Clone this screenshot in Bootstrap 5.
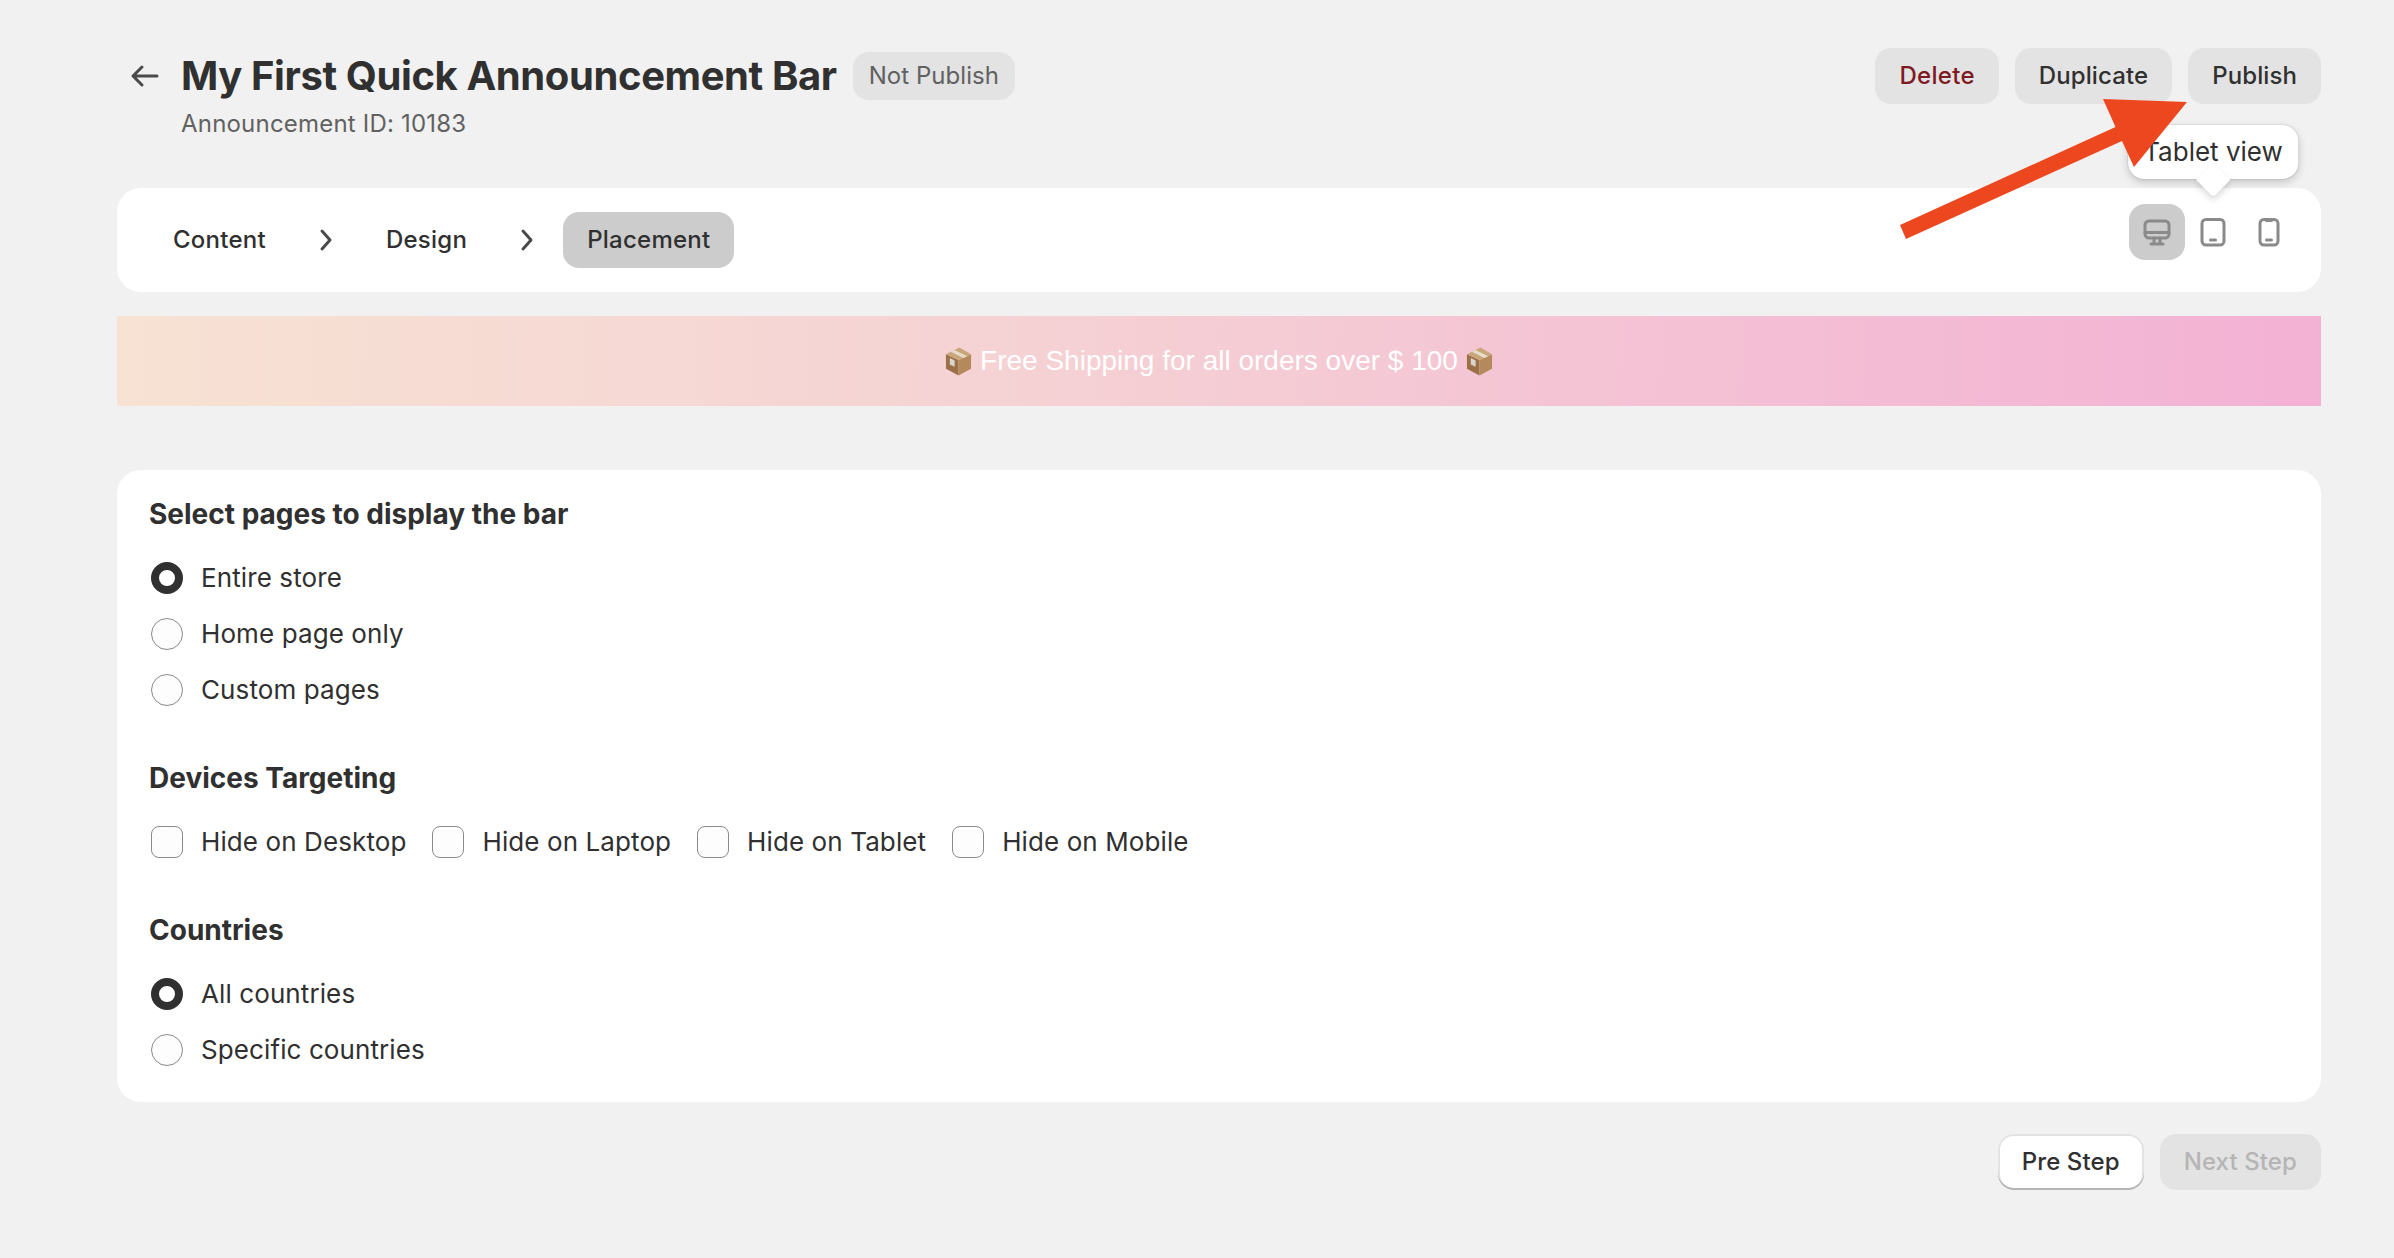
<!DOCTYPE html>
<html lang="en">
<head>
  <meta charset="UTF-8">
  <title>My First Quick Announcement Bar</title>
  <meta name="viewport" content="width=device-width, initial-scale=1.0">
  <link href="https://cdn.jsdelivr.net/npm/bootstrap@5.3.0/dist/css/bootstrap.min.css" rel="stylesheet">
  <style>
    body {
      background-color: #f1f1f1;
      color: #303030;
      font-family: Inter, "Liberation Sans", sans-serif;
      font-size: 26px;
      margin: 0;
    }

    .page-wrap {
      position: relative;
      padding: 48px 73px 68px 117px;
    }

    .page-head {
      height: 140px;
    }

    .back-link {
      width: 64px;
      height: 56px;
      padding-left: 13px;
      color: #4a4a4a;
    }

    .page-title {
      font-size: 40px;
      font-weight: 650;
      line-height: 56px;
      letter-spacing: -0.4px;
      margin: 0;
    }

    .state-pill {
      background-color: #e3e3e3;
      color: #616161;
      border-radius: 16px;
      font-size: 24px;
      letter-spacing: 0.05px;
      line-height: 48px;
      padding: 0 16px;
      margin-left: 16px;
    }

    .page-sub {
      color: #616161;
      font-size: 24px;
      letter-spacing: 0.2px;
      line-height: 32px;
      margin-top: 4px;
    }

    .act-btn {
      background-color: #e3e3e3;
      border: 0;
      border-radius: 16px;
      color: #303030;
      font-size: 24px;
      font-weight: 550;
      letter-spacing: 0.1px;
      line-height: 56px;
      padding: 0 24px;
    }

    .act-btn:hover { background-color: #e3e3e3; color: #303030; }
    .act-danger, .act-danger:hover { color: #7e1a1f; letter-spacing: 0.3px; }

    .act-white, .act-white:hover {
      background-color: #fff;
      box-shadow: inset 0 -2px 0 #b5b5b5, inset 0 0 0 2px #e3e3e3;
    }

    .act-btn.act-off {
      color: #b5b5b5;
      opacity: 1;
      background-color: #e3e3e3;
    }

    .step-bar {
      background-color: #fff;
      border-radius: 24px;
      height: 104px;
      padding: 16px 24px 16px 32px;
    }

    .step-pill {
      border-radius: 16px;
      font-size: 24px;
      font-weight: 500;
      letter-spacing: 0.25px;
      line-height: 56px;
      padding: 0 24px;
    }

    .step-pill.is-on { background-color: #ccc; }

    .step-sep {
      width: 72px;
      color: #4a4a4a;
    }

    .view-btn {
      position: relative;
      width: 56px;
      height: 56px;
      border-radius: 16px;
    }

    .view-btn.is-on { background-color: #ccc; }

    .tip-box {
      position: absolute;
      left: 50%;
      bottom: 81px;
      transform: translateX(-50%);
      background-color: #fff;
      border-radius: 16px;
      box-shadow: 0 0 0 1px rgba(0, 0, 0, 0.05), 0 3px 8px rgba(0, 0, 0, 0.2);
      font-size: 26px;
      line-height: 54px;
      padding: 0 15px;
      white-space: nowrap;
    }

    .tip-box::after {
      content: "";
      position: absolute;
      left: 50%;
      bottom: -13px;
      width: 24px;
      height: 24px;
      margin-left: -12px;
      background-color: #fff;
      transform: rotate(45deg);
      border-radius: 0 0 4px 0;
      box-shadow: 3px 3px 6px rgba(0, 0, 0, 0.14);
    }

    .promo-bar {
      background: linear-gradient(91deg, #f7e2d3 0%, #f5d2d4 40%, #f3b1d4 100%);
      color: #fff;
      font-family: "Liberation Sans", Arial, sans-serif;
      font-size: 28px;
      height: 90px;
      margin-top: 24px;
      margin-bottom: 64px;
    }

    .box-glyph { margin: 0 8px; }

    .form-panel {
      background-color: #fff;
      border-radius: 24px;
      padding: 24px 32px;
    }

    .group-title {
      font-size: 28px;
      font-weight: 650;
      line-height: 40px;
      margin: 0 0 16px;
    }

    .group-gap { margin-top: 40px; }

    .pick-row {
      height: 56px;
      padding: 0 0 0 2px;
      margin: 0;
    }

    .pick-row .form-check-input {
      width: 32px;
      height: 32px;
      margin: 0 18px 0 0;
      float: none;
      flex-shrink: 0;
      background-color: #fdfdfd;
      border: 1.5px solid #8a8a8a;
      box-shadow: none;
    }

    .pick-row .form-check-input[type=checkbox] { border-radius: 8px; }

    .pick-row .form-check-input:checked {
      background-color: #fff;
      background-image: none;
      border: 8px solid #303030;
    }

    .pick-row .form-check-label {
      letter-spacing: 0.1px;
      line-height: 56px;
    }

    .foot-row { margin-top: 32px; }

    .mark-arrow {
      position: absolute;
      left: 1890px;
      top: 90px;
      pointer-events: none;
    }
  </style>
</head>
<body>
  <div class="page-wrap">

    <!-- Header -->
    <div class="page-head d-flex justify-content-between align-items-start">
      <div class="d-flex">
        <div class="back-link d-flex align-items-center">
          <svg width="30" height="30" viewBox="0 0 30 30" fill="none" stroke="currentColor" stroke-width="3" stroke-linecap="round" stroke-linejoin="round">
            <path d="M27 15H3M12 6l-9 9 9 9"/>
          </svg>
        </div>
        <div>
          <div class="d-flex align-items-center">
            <h1 class="page-title">My First Quick Announcement Bar</h1>
            <span class="state-pill">Not Publish</span>
          </div>
          <div class="page-sub">Announcement ID: 10183</div>
        </div>
      </div>
      <div class="d-flex gap-3">
        <button class="btn act-btn act-danger" type="button">Delete</button>
        <button class="btn act-btn" type="button">Duplicate</button>
        <button class="btn act-btn" type="button">Publish</button>
      </div>
    </div>

    <!-- Steps -->
    <div class="step-bar d-flex justify-content-between align-items-start">
      <div class="d-flex align-items-center align-self-center">
        <span class="step-pill">Content</span>
        <span class="step-sep d-flex justify-content-center">
          <svg width="24" height="24" viewBox="0 0 24 24" fill="none" stroke="currentColor" stroke-width="3" stroke-linecap="round" stroke-linejoin="round"><path d="M8 3l8 9-8 9"/></svg>
        </span>
        <span class="step-pill">Design</span>
        <span class="step-sep d-flex justify-content-center">
          <svg width="24" height="24" viewBox="0 0 24 24" fill="none" stroke="currentColor" stroke-width="3" stroke-linecap="round" stroke-linejoin="round"><path d="M8 3l8 9-8 9"/></svg>
        </span>
        <span class="step-pill is-on">Placement</span>
      </div>
      <div class="d-flex">
        <div class="view-btn is-on d-flex align-items-center justify-content-center">
          <svg width="40" height="40" viewBox="0 0 40 40" fill="none" stroke="#8a8a8a" stroke-width="3" stroke-linecap="round" stroke-linejoin="round">
            <rect x="8" y="9" width="24" height="17" rx="4"/>
            <path d="M8 20.5h24M17 26v5M23 26v5M14 32h12"/>
          </svg>
        </div>
        <div class="view-btn d-flex align-items-center justify-content-center">
          <svg width="40" height="40" viewBox="0 0 40 40" fill="none" stroke="#8a8a8a" stroke-width="3" stroke-linecap="round" stroke-linejoin="round">
            <rect x="9" y="7.5" width="22" height="25.5" rx="4"/>
            <path d="M17.5 28h5"/>
          </svg>
          <div class="tip-box">Tablet view</div>
        </div>
        <div class="view-btn d-flex align-items-center justify-content-center">
          <svg width="40" height="40" viewBox="0 0 40 40" fill="none" stroke="#8a8a8a" stroke-width="3" stroke-linecap="round" stroke-linejoin="round">
            <rect x="11" y="7.5" width="18" height="25.5" rx="4"/>
            <path d="M17.5 28h5M17.5 8.5h5"/>
          </svg>
        </div>
      </div>
    </div>

    <!-- Preview -->
    <div class="promo-bar d-flex align-items-center justify-content-center">
      <svg class="box-glyph" width="27" height="30" viewBox="0 0 28 30">
        <polygon points="14,30 1,23 1,8 14,14" fill="#9c7047"/>
        <polygon points="14,30 27,23 27,8 14,14" fill="#b48a5c"/>
        <polygon points="1,8 15,1 27,8 14,14" fill="#c9a67a"/>
        <polygon points="6,5.5 10,3.5 23,10 19,12" fill="#e6dccb"/>
        <polygon points="5,12 10,14.5 10,21 5,18.5" fill="#d9d6cf"/>
      </svg>
      <span>Free Shipping for all orders over $ 100</span>
      <svg class="box-glyph" width="27" height="30" viewBox="0 0 28 30">
        <polygon points="14,30 1,23 1,8 14,14" fill="#9c7047"/>
        <polygon points="14,30 27,23 27,8 14,14" fill="#b48a5c"/>
        <polygon points="1,8 15,1 27,8 14,14" fill="#c9a67a"/>
        <polygon points="6,5.5 10,3.5 23,10 19,12" fill="#e6dccb"/>
        <polygon points="5,12 10,14.5 10,21 5,18.5" fill="#d9d6cf"/>
      </svg>
    </div>

    <!-- Placement form -->
    <div class="form-panel">
      <h2 class="group-title">Select pages to display the bar</h2>
      <div class="form-check pick-row d-flex align-items-center">
        <input class="form-check-input" type="radio" name="pages" id="pageAll" checked>
        <label class="form-check-label" for="pageAll">Entire store</label>
      </div>
      <div class="form-check pick-row d-flex align-items-center">
        <input class="form-check-input" type="radio" name="pages" id="pageHome">
        <label class="form-check-label" for="pageHome">Home page only</label>
      </div>
      <div class="form-check pick-row d-flex align-items-center">
        <input class="form-check-input" type="radio" name="pages" id="pageCustom">
        <label class="form-check-label" for="pageCustom">Custom pages</label>
      </div>

      <h2 class="group-title group-gap">Devices Targeting</h2>
      <div class="d-flex">
        <div class="form-check pick-row d-flex align-items-center me-4">
          <input class="form-check-input" type="checkbox" id="hideDesktop">
          <label class="form-check-label" for="hideDesktop">Hide on Desktop</label>
        </div>
        <div class="form-check pick-row d-flex align-items-center me-4">
          <input class="form-check-input" type="checkbox" id="hideLaptop">
          <label class="form-check-label" for="hideLaptop">Hide on Laptop</label>
        </div>
        <div class="form-check pick-row d-flex align-items-center me-4">
          <input class="form-check-input" type="checkbox" id="hideTablet">
          <label class="form-check-label" for="hideTablet">Hide on Tablet</label>
        </div>
        <div class="form-check pick-row d-flex align-items-center">
          <input class="form-check-input" type="checkbox" id="hideMobile">
          <label class="form-check-label" for="hideMobile">Hide on Mobile</label>
        </div>
      </div>

      <h2 class="group-title group-gap">Countries</h2>
      <div class="form-check pick-row d-flex align-items-center">
        <input class="form-check-input" type="radio" name="countries" id="countryAll" checked>
        <label class="form-check-label" for="countryAll">All countries</label>
      </div>
      <div class="form-check pick-row d-flex align-items-center">
        <input class="form-check-input" type="radio" name="countries" id="countrySome">
        <label class="form-check-label" for="countrySome">Specific countries</label>
      </div>
    </div>

    <div class="foot-row d-flex justify-content-end gap-3">
      <button class="btn act-btn act-white" type="button">Pre Step</button>
      <button class="btn act-btn act-off" type="button" disabled>Next Step</button>
    </div>

    <!-- Annotation arrow -->
    <svg class="mark-arrow" width="310" height="160" viewBox="1890 90 310 160">
      <polygon points="1900,225 2115.5,127 2103,99 2187,102 2134,167 2122,141 1906,239" fill="#ec471e"/>
    </svg>
  </div>
</body>
</html>
